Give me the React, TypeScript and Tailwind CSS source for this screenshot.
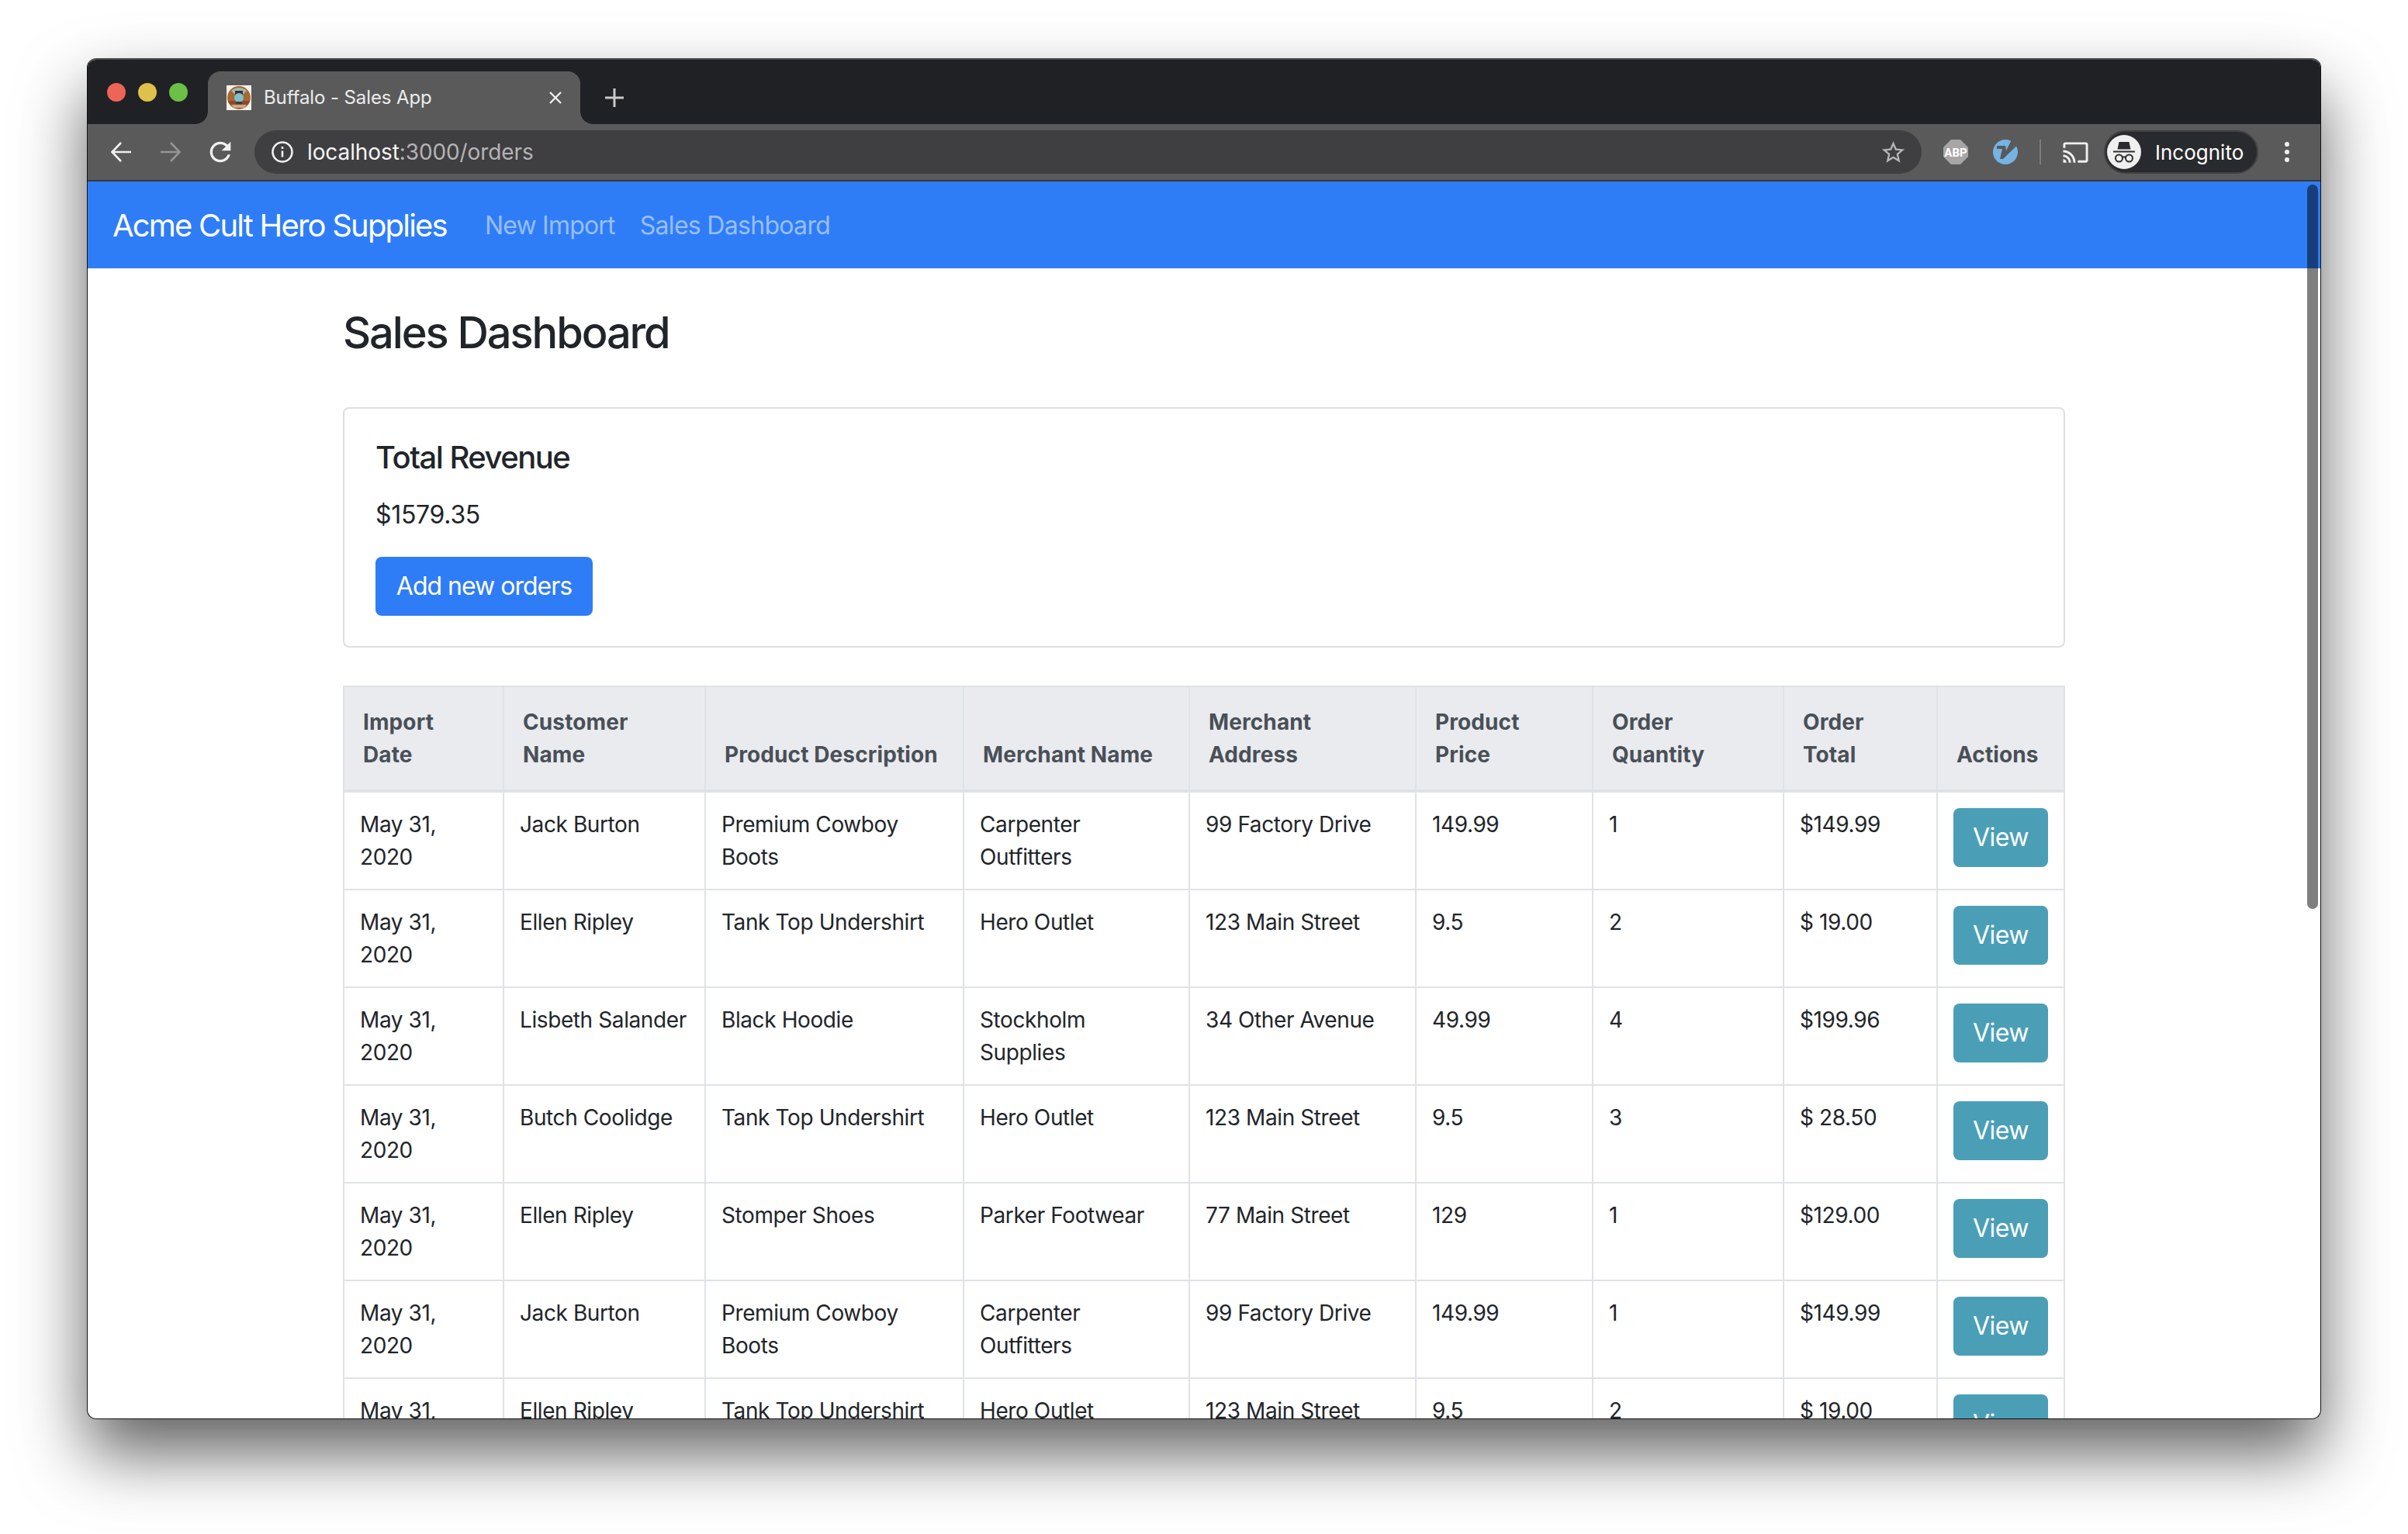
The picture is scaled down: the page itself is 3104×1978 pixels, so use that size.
const ROWS = [
  ['Jack Burton', 'Premium Cowboy\nBoots', 'Carpenter\nOutfitters', '99 Factory Drive', '149.99', '1', '$149.99'],
  ['Ellen Ripley', 'Tank Top Undershirt', 'Hero Outlet', '123 Main Street', '9.5', '2', '$ 19.00'],
  ['Lisbeth Salander', 'Black Hoodie', 'Stockholm\nSupplies', '34 Other Avenue', '49.99', '4', '$199.96'],
  ['Butch Coolidge', 'Tank Top Undershirt', 'Hero Outlet', '123 Main Street', '9.5', '3', '$ 28.50'],
  ['Ellen Ripley', 'Stomper Shoes', 'Parker Footwear', '77 Main Street', '129', '1', '$129.00'],
  ['Jack Burton', 'Premium Cowboy\nBoots', 'Carpenter\nOutfitters', '99 Factory Drive', '149.99', '1', '$149.99'],
  ['Ellen Ripley', 'Tank Top Undershirt', 'Hero Outlet', '123 Main Street', '9.5', '2', '$ 19.00'],
]

const HEADERS = [
  'Import\nDate',
  'Customer\nName',
  'Product Description',
  'Merchant Name',
  'Merchant\nAddress',
  'Product\nPrice',
  'Order\nQuantity',
  'Order\nTotal',
  'Actions',
]

function Favicon() {
  return (
    <svg width="32" height="32" viewBox="0 0 32 32" className="shrink-0">
      <rect width="32" height="32" fill="#f4f2ee" />
      <circle cx="16" cy="16" r="15" fill="#a9682f" />
      <path d="M2 20a15 15 0 0 0 28 0z" fill="#8c4a2c" />
      <path d="M6 7a15 15 0 0 1 20 0l-4 4H10z" fill="#9fbcb8" />
      <rect x="11" y="7" width="10" height="6" fill="#3a3230" />
      <circle cx="16" cy="16" r="6" fill="#7fc0d0" />
      <rect x="12" y="21" width="8" height="3" fill="#4a3a30" />
      <path d="M6 25h20l-3 4H9z" fill="#c9a98a" />
    </svg>
  )
}

function NavArrow({ flip, color }: { flip?: boolean; color: string }) {
  return (
    <svg width="28" height="28" viewBox="0 0 28 28" className={flip ? 'rotate-180' : ''} fill="none" stroke={color} strokeWidth="2.6">
      <path d="M14 2 2.500 14 14 26M2.500 14H27" />
    </svg>
  )
}

function AbpIcon() {
  return (
    <svg width="32" height="32" viewBox="0 0 32 32">
      <polygon points="10,0 22,0 32,10 32,22 22,32 10,32 0,22 0,10" fill="#a6a6a6" />
      <text x="16" y="21.5" textAnchor="middle" fontSize="15" fontWeight="800" fill="#fff" fontFamily="Roboto, sans-serif">ABP</text>
    </svg>
  )
}

function VIcon() {
  return (
    <svg width="32" height="32" viewBox="0 0 32 32">
      <circle cx="16" cy="16" r="16" fill="#75b3e3" />
      <path d="M5 8h11l1 6L24 .5 30.500 8 13 25H9l3-13H5z" fill="#595959" />
    </svg>
  )
}

function IncognitoIcon() {
  return (
    <svg width="44" height="44" viewBox="0 0 44 44" className="shrink-0">
      <circle cx="22" cy="22" r="22" fill="#efefef" />
      <path d="M15.500 9h13l2 9.500h-17zM8 20.500h28v2H8z" fill="#2b2c2f" />
      <g fill="none" stroke="#2b2c2f" strokeWidth="2">
        <circle cx="15.500" cy="30" r="4.500" />
        <circle cx="28.500" cy="30" r="4.500" />
        <path d="M20 29c1.500-1 2.500-1 4 0" />
      </g>
    </svg>
  )
}

function BrowserChrome() {
  return (
    <>
      {/* tab strip */}
      <div className="flex h-[83px] shrink-0 bg-[#202124]">
        <div className="flex h-[84px] items-center gap-4 pl-[25px]">
          <span className="size-6 rounded-full bg-[#ee6457]" />
          <span className="size-6 rounded-full bg-[#e1bf4b]" />
          <span className="size-6 rounded-full bg-[#6cbf47]" />
        </div>
        <div className="relative ml-[26px] mt-[15px] flex h-[68px] w-[480px] items-center rounded-t-[16px] bg-[#5a5a5a] pl-[24px]">
          <span className="absolute -left-4 bottom-0 size-4 bg-[radial-gradient(circle_at_0_0,#202124_15.500px,#5a5a5a_16px)]" />
          <span className="absolute -right-4 bottom-0 size-4 bg-[radial-gradient(circle_at_100%_0,#202124_15.500px,#5a5a5a_16px)]" />
          <Favicon />
          <span className="ml-4 text-[24px] tracking-[-0.1px] text-[#ececec]">Buffalo - Sales App</span>
          <svg width="16" height="16" viewBox="0 0 16 16" className="absolute left-[440px] top-[26px]" stroke="#f0f0f0" strokeWidth="2.4">
            <path d="M1 1l14 14M15 1 1 15" />
          </svg>
        </div>
        <svg width="24" height="24" viewBox="0 0 24 24" className="ml-[32px] mt-[37px]" stroke="#c9c9c9" strokeWidth="3">
          <path d="M12 0v24M0 12h24" />
        </svg>
      </div>

      {/* toolbar */}
      <div className="flex h-[74px] shrink-0 items-center border-b-2 border-[#39393b] bg-[#5a5a5a] px-[11px]">
        <div className="flex w-16 justify-center"><NavArrow color="#f0f0f0" /></div>
        <div className="flex w-16 justify-center"><NavArrow flip color="#949494" /></div>
        <div className="flex w-16 justify-center">
          <svg width="40" height="40" viewBox="0 0 24 24" fill="#f0f0f0">
            <path d="M17.650 6.350C16.200 4.900 14.210 4 12 4c-4.420 0-7.990 3.580-7.990 8s3.570 8 7.990 8c3.730 0 6.840-2.550 7.730-6h-2.080c-.82 2.330-3.040 4-5.650 4-3.310 0-6-2.690-6-6s2.690-6 6-6c1.660 0 3.140.69 4.220 1.780L13 11h7V4l-2.350 2.350z" />
          </svg>
        </div>
        <div className="ml-3 flex h-14 flex-1 items-center rounded-full bg-[#3f3e41] pl-[22px] pr-[19px]">
          <svg width="28" height="28" viewBox="0 0 28 28" className="shrink-0" fill="none" stroke="#f0f0f0" strokeWidth="2.600">
            <circle cx="14" cy="14" r="12.500" />
            <path d="M14 12.500v8M14 7v3" />
          </svg>
          <span className="ml-[18px] flex-1 text-[28px] tracking-[-0.1px]">
            <span className="text-[#f4f4f4]">localhost</span>
            <span className="text-[#b4b4b4]">:3000/orders</span>
          </span>
          <svg width="35" height="35" viewBox="0 0 24 24" fill="#b5b5b5">
            <path d="M22 9.240l-7.190-.62L12 2 9.190 8.630 2 9.240l5.460 4.730L5.820 21 12 17.270 18.180 21l-1.630-7.030L22 9.240zM12 15.400l-3.760 2.270 1-4.280-3.320-2.880 4.380-.38L12 6.100l1.710 4.040 4.380.38-3.320 2.880 1 4.280L12 15.400z" />
          </svg>
        </div>
        <div className="ml-3 flex w-16 justify-center"><AbpIcon /></div>
        <div className="flex w-16 justify-center"><VIcon /></div>
        <span className="ml-3 h-8 w-[2px] bg-[#7d7d7d]" />
        <svg width="35" height="35" viewBox="0 0 24 24" fill="#f0f0f0" className="ml-[27px]">
          <path d="M21 3H3c-1.100 0-2 .9-2 2v3h2V5h18v14h-7v2h7c1.100 0 2-.9 2-2V5c0-1.100-.9-2-2-2zM1 18v3h3c0-1.660-1.340-3-3-3zm0-4v2c2.760 0 5 2.240 5 5h2c0-3.870-3.130-7-7-7zm0-4v2c4.970 0 9 4.030 9 9h2c0-6.080-4.930-11-11-11z" />
        </svg>
        <div className="ml-[19px] flex h-14 w-[199px] items-center rounded-full border-2 border-[#414143] bg-[#292a2d] pl-[2px]">
          <IncognitoIcon />
          <span className="ml-[18px] text-[26px] text-white">Incognito</span>
        </div>
        <div className="ml-[5px] flex w-16 flex-col items-center gap-1">
          <span className="size-[6px] rounded-full bg-[#f0f0f0]" />
          <span className="size-[6px] rounded-full bg-[#f0f0f0]" />
          <span className="size-[6px] rounded-full bg-[#f0f0f0]" />
        </div>
      </div>
    </>
  )
}

function OrdersTable() {
  return (
    <table className="w-[2220px] table-fixed border-collapse text-[28px] leading-[42px] text-[#212529]">
      <colgroup>
        <col className="w-[206px]" />
        <col className="w-[260px]" />
        <col className="w-[333px]" />
        <col className="w-[291px]" />
        <col className="w-[292px]" />
        <col className="w-[228px]" />
        <col className="w-[246px]" />
        <col className="w-[198px]" />
        <col className="w-[164px]" />
      </colgroup>
      <thead>
        <tr>
          {HEADERS.map((h) => (
            <th
              key={h}
              className="whitespace-pre border-2 border-b-4 border-[#dfe2e6] bg-[#e9ebef] p-6 text-left align-bottom font-bold tracking-[0.1px] text-[#495057]"
            >
              {h}
            </th>
          ))}
        </tr>
      </thead>
      <tbody>
        {ROWS.map((row, i) => (
          <tr key={i}>
            <td className="whitespace-pre border-2 border-[#dfe2e6] p-5 align-top tracking-[-0.4px]">{'May 31,\n2020'}</td>
            {row.map((cell, j) => (
              <td key={j} className="whitespace-pre border-2 border-[#dfe2e6] p-5 align-top tracking-[-0.4px]">
                {cell}
              </td>
            ))}
            <td className="border-2 border-[#dfe2e6] p-5 align-top">
              <button className="block h-[76px] w-[122px] rounded-lg bg-[#4a9fb6] text-[32px] tracking-[-0.5px] text-white">View</button>
            </td>
          </tr>
        ))}
      </tbody>
    </table>
  )
}

export default function App() {
  return (
    <div className="h-[1978px] w-[3104px] overflow-hidden bg-white pl-[112px] pt-[75px] font-[Inter,sans-serif]">
      <div className="relative flex h-[1755px] w-[2880px] flex-col overflow-hidden rounded-[12px] border border-t-2 border-[#111] border-t-[#4c4c4e] bg-white shadow-[0_44px_86px_rgba(0,0,0,0.62)]">
        <BrowserChrome />

        <nav className="flex h-[112px] shrink-0 items-center bg-[#2f7df6] pl-[32px] pt-[2px]">
          <span className="text-[40px] tracking-[-1.8px] text-white">Acme Cult Hero Supplies</span>
          <span className="ml-[49px] text-[32px] tracking-[-0.8px] text-white/50">New Import</span>
          <span className="ml-[32px] text-[32px] tracking-[-0.7px] text-white/50">Sales Dashboard</span>
        </nav>

        <main className="ml-[329px] w-[2220px] flex-1">
          <h1 className="mt-[50px] text-[56px] font-medium leading-[67px] tracking-[-2.1px] text-[#212529]">Sales Dashboard</h1>

          <section className="mb-[49px] mt-[62px] rounded-lg border-2 border-[#dfdfdf] px-10 py-[39px]">
            <h5 className="text-[40px] font-medium leading-[48px] tracking-[-1.5px] text-[#212529]">Total Revenue</h5>
            <p className="mb-[30px] mt-[26px] text-[32px] leading-[48px] tracking-[-0.3px] text-[#212529]">$1579.35</p>
            <button className="block h-[76px] w-[280px] rounded-lg bg-[#2f7df6] text-[32px] tracking-[-1px] text-white">Add new orders</button>
          </section>

          <OrdersTable />
        </main>

        {/* overlay scrollbar */}
        <span className="absolute left-[2861px] top-[161px] h-[934px] w-[14px] rounded-full bg-black/50" />
      </div>
    </div>
  )
}
